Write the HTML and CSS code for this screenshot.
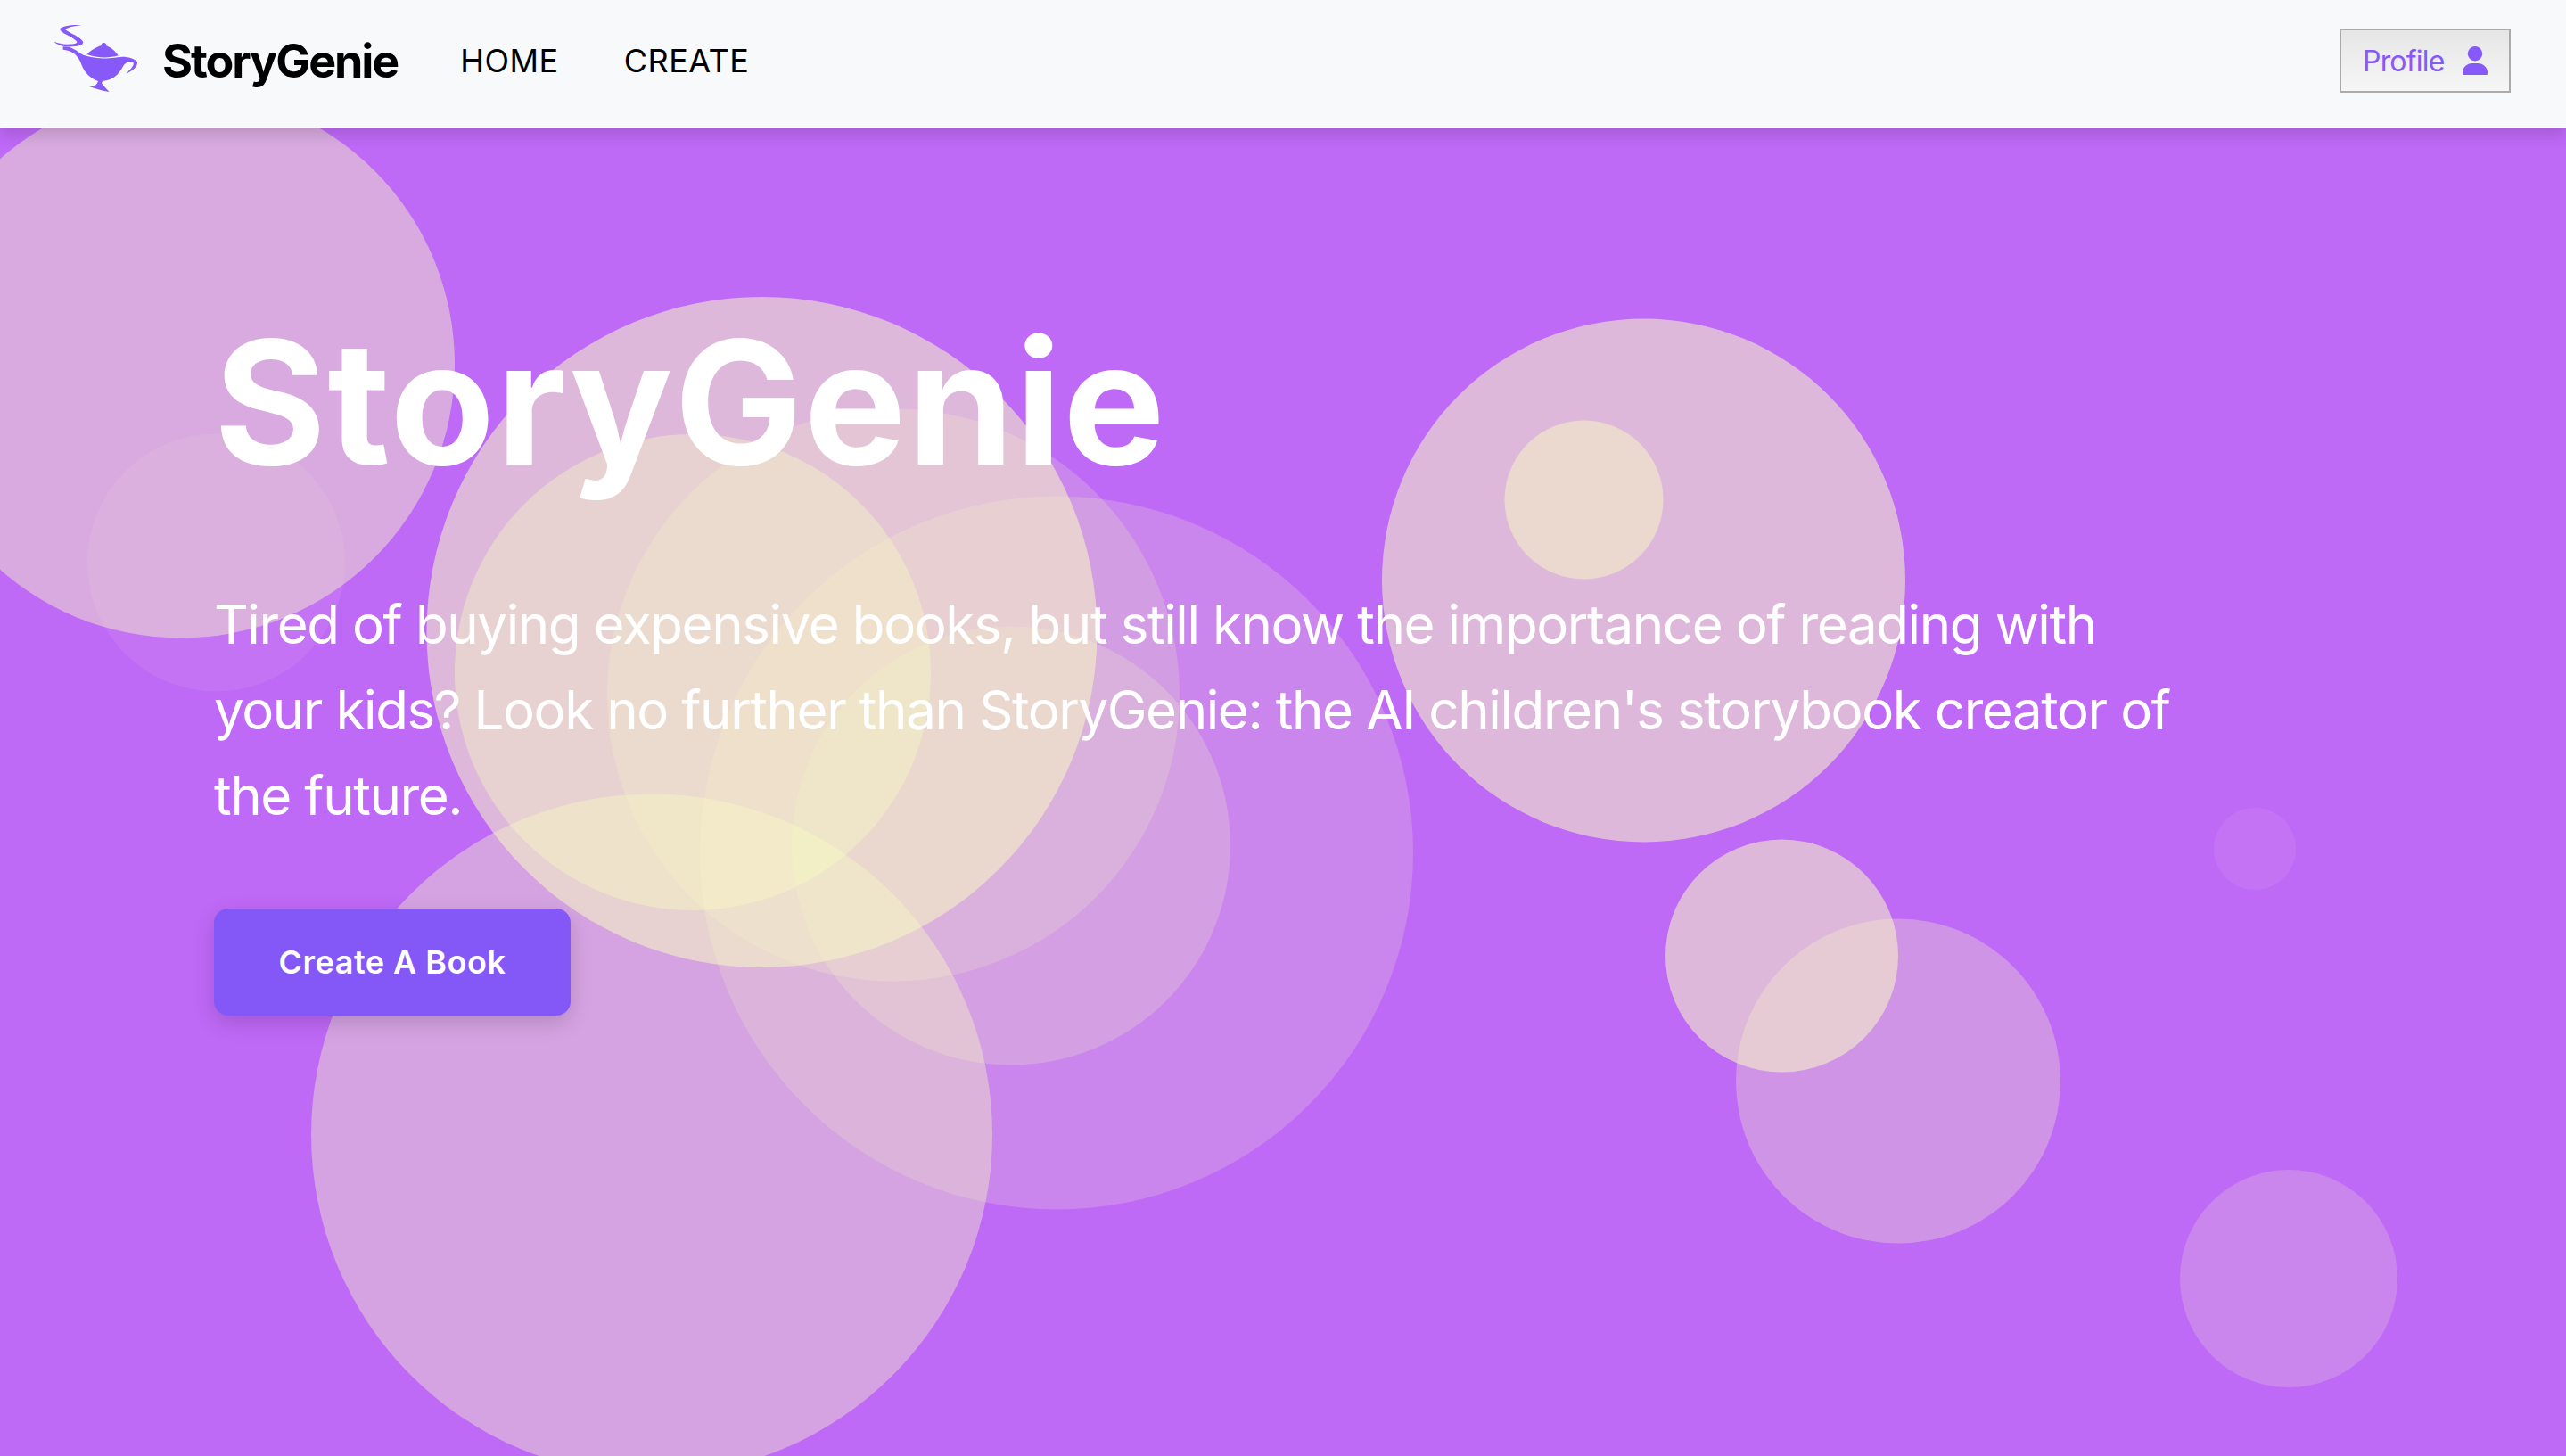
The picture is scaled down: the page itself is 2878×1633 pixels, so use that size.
FILE: index.html
```html
<!DOCTYPE html>
<html lang="en">
<head>
<meta charset="utf-8">
<title>StoryGenie</title>
<link rel="stylesheet" href="styles.css">
</head>
<body>
<header class="nav">
  <a class="brand" href="#">
    <svg class="lamp" viewBox="0 0 390 300" aria-hidden="true">
      <path d="M155 55C125 52 85 58 82 68C82 80 120 90 137 108C145 116 130 119 105 119C90 118 75 115 62 110C72 120 85 125 105 127C130 128 160 125 160 112C155 95 110 80 100 70C105 62 130 57 155 55Z"/>
      <path d="M92 127C120 125 135 140 160 155C190 165 240 170 275 163C300 158 330 165 342 178C345 195 325 208 305 218C315 205 335 190 328 180C318 172 300 180 293 195C280 220 260 240 225 243L222 250C228 258 238 270 248 279C225 277 200 268 180 261C195 262 205 258 210 243C185 235 165 215 155 190C148 165 130 140 92 137Z"/>
      <path d="M172 153C185 140 205 128 220 124C220 118 223 114 229 114C236 114 239 119 238 124C255 130 270 145 278 157C245 167 205 165 172 153Z"/>
    </svg>
    <span class="brand-name">StoryGenie</span>
  </a>
  <nav class="links">
    <a href="#">HOME</a>
    <a href="#">CREATE</a>
  </nav>
  <button class="profile" type="button">
    <span>Profile</span>
    <svg class="person" viewBox="0 0 28 32" aria-hidden="true">
      <circle cx="14" cy="8.2" r="8.2"/>
      <path d="M.5 32Q0 31 0 29.5C0 23.5 5 19 11 19H17C23 19 28 23.5 28 29.5Q28 31 27.5 32Z"/>
    </svg>
  </button>
</header>
<main class="hero">
  <svg class="bubbles" viewBox="0 143 2878 1490" aria-hidden="true">
    <circle cx="203" cy="408.5" r="307" fill-opacity=".45"/>
    <circle cx="242.5" cy="631" r="144.5" fill-opacity=".07"/>
    <circle cx="854.5" cy="709" r="376" fill-opacity=".55"/>
    <circle cx="777" cy="754" r="267" fill-opacity=".4"/>
    <circle cx="1002" cy="779.5" r="321" fill-opacity=".2"/>
    <circle cx="1134" cy="948.5" r="246" fill-opacity=".22"/>
    <circle cx="1185" cy="956.5" r="400" fill-opacity=".2"/>
    <circle cx="731" cy="1272.5" r="382" fill-opacity=".4"/>
    <circle cx="1843.5" cy="651" r="293.5" fill-opacity=".55"/>
    <circle cx="1776.5" cy="560.5" r="89" fill-opacity=".5"/>
    <circle cx="1998.5" cy="1072" r="130.5" fill-opacity=".55"/>
    <circle cx="2129" cy="1212.5" r="182" fill-opacity=".3"/>
    <circle cx="2529" cy="952" r="46" fill-opacity=".07"/>
    <circle cx="2567" cy="1434" r="122" fill-opacity=".2"/>
  </svg>
  <div class="hero-copy">
    <h1>StoryGenie</h1>
    <p>Tired of buying expensive books, but still know the importance of reading with your kids? Look no further than StoryGenie: the AI children's storybook creator of the future.</p>
    <a class="cta" href="#">Create A Book</a>
  </div>
</main>
</body>
</html>
```
FILE: styles.css
```css
* { box-sizing: border-box; }
html, body { margin: 0; height: 100%; }
body {
  font-family: Inter, "Liberation Sans", sans-serif;
  background: #bf69f7;
  display: flex;
  flex-direction: column;
  height: 1633px;
  overflow: hidden;
}
a { text-decoration: none; color: inherit; }

.nav {
  position: relative;
  z-index: 2;
  flex: 0 0 143px;
  display: flex;
  align-items: center;
  padding: 0 62px 7px 40px;
  background: #f8f9fb;
  box-shadow: 0 8px 16px rgba(0, 0, 0, .14);
}
.brand { display: flex; align-items: center; color: #000; }
.lamp { width: 130px; height: 100px; margin: 0 12px 16px 0; fill: #8759f8; }
.brand-name { font-size: 52px; font-weight: 700; letter-spacing: -2.1px; }
.links {
  display: flex;
  gap: 73px;
  margin-left: 70px;
  font-size: 36px;
  letter-spacing: .5px;
  color: #000;
}
.profile {
  margin-left: auto;
  width: 192px;
  height: 72px;
  display: flex;
  align-items: center;
  justify-content: space-between;
  padding: 0 24px;
  border: 2px solid #ababab;
  border-radius: 0;
  background: linear-gradient(#e6e6e6, #f6f6f6);
  color: #8759f8;
  font: 400 32px Inter, "Liberation Sans", sans-serif;
  letter-spacing: -.8px;
}
.person { width: 28px; height: 32px; fill: #8759f8; }

.hero {
  position: relative;
  flex: 1;
  overflow: hidden;
  background: #bf69f7;
}
.bubbles { position: absolute; inset: 0; width: 100%; height: 100%; fill: #f8fac4; }
.hero-copy {
  position: relative;
  padding: 212px 0 0 240px;
  color: #fff;
}
h1 {
  margin: 0;
  font-size: 192px;
  line-height: 192px;
  font-weight: 700;
  letter-spacing: 1.5px;
}
p {
  margin: 105px 0 0;
  width: 2220px;
  font-size: 60px;
  line-height: 96px;
  font-weight: 400;
  letter-spacing: -1.4px;
}
.cta {
  display: flex;
  align-items: center;
  justify-content: center;
  width: 400px;
  height: 120px;
  margin-top: 79px;
  border-radius: 16px;
  background: #8457f7;
  color: #fff;
  font-size: 36px;
  font-weight: 600;
  letter-spacing: .5px;
  box-shadow: 0 8px 24px rgba(0, 0, 0, .16);
}
```
